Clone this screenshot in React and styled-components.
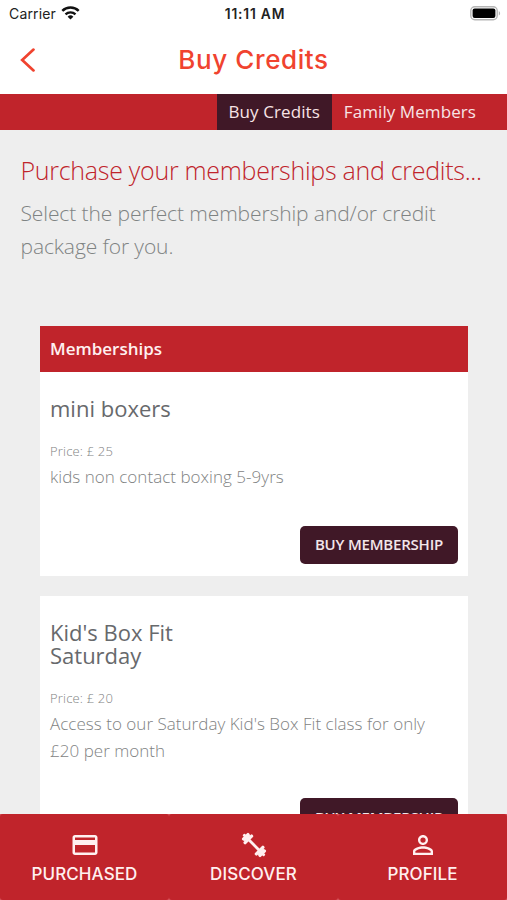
import React from "react";
import styled, { createGlobalStyle, ThemeProvider } from "styled-components";
import { MdOutlineCreditCard, MdPersonOutline } from "react-icons/md";

const theme = {
  colors: {
    brand: "#c0242b",
    brandDark: "#401827",
    tint: "#f0432f",
    page: "#eeeeee",
    heading: "#67696c",
    muted: "#7f8383"
  },
  fonts: {
    system: `Inter, "Liberation Sans", sans-serif`,
    body: `"Open Sans", "Noto Sans", sans-serif`
  }
};

const GlobalStyle = createGlobalStyle`
  * {
    box-sizing: border-box;
  }
  body {
    margin: 0;
    background: #ffffff;
  }
  h1, h2, h3, p {
    margin: 0;
    font-weight: 400;
  }
`;

const Screen = styled.div`
  display: flex;
  flex-direction: column;
  width: 507px;
  height: 900px;
  overflow: hidden;
  background: #ffffff;
  font-family: ${({ theme }) => theme.fonts.body};
`;

const StatusBar = styled.div`
  display: grid;
  grid-template-columns: 1fr auto 1fr;
  align-items: center;
  flex: none;
  height: 28px;
  padding: 0 6px 0 9px;
  font: 500 14px/28px ${({ theme }) => theme.fonts.system};
  color: #222222;
`;

const Carrier = styled.div`
  display: flex;
  align-items: center;
  gap: 5px;
  font-weight: 400;
  letter-spacing: 0.15px;

  svg {
    margin-top: -3px;
  }
`;

const Clock = styled.div`
  font-weight: 600;
  font-size: 13.8px;
  letter-spacing: 0.8px;
`;

const BatterySlot = styled.div`
  display: flex;
  justify-content: flex-end;
  margin-top: -2px;
`;

const NavBar = styled.header`
  display: grid;
  grid-template-columns: 60px 1fr 60px;
  align-items: center;
  flex: none;
  height: 66px;
  padding-bottom: 3px;
`;

const BackButton = styled.button`
  display: flex;
  padding: 0 0 0 20px;
  border: 0;
  background: none;
`;

const NavTitle = styled.h1`
  font-family: ${({ theme }) => theme.fonts.system};
  font-size: 26px;
  font-weight: 500;
  letter-spacing: 0.6px;
  text-align: center;
  color: ${({ theme }) => theme.colors.tint};
`;

const Tabs = styled.nav`
  display: flex;
  justify-content: flex-end;
  flex: none;
  height: 36px;
  padding-right: 19px;
  background: ${({ theme }) => theme.colors.brand};
`;

const Tab = styled.a`
  padding: 0 12px;
  font-size: 17px;
  letter-spacing: 0.08px;
  line-height: 36px;
  color: #f8e4e6;
  background: ${({ $active, theme }) =>
    $active ? theme.colors.brandDark : "transparent"};
`;

const Content = styled.main`
  flex: 1;
  min-height: 0;
  overflow: hidden;
  padding: 23px 19px 0 20.5px;
  background: ${({ theme }) => theme.colors.page};
`;

const Title = styled.h2`
  font-size: 25px;
  font-weight: 300;
  letter-spacing: -0.28px;
  line-height: 34px;
  white-space: nowrap;
  color: ${({ theme }) => theme.colors.brand};
`;

const Intro = styled.p`
  margin-top: 10px;
  font-size: 21px;
  font-weight: 300;
  letter-spacing: -0.1px;
  line-height: 33px;
  color: ${({ theme }) => theme.colors.muted};
`;

const Packages = styled.section`
  display: flex;
  flex-direction: column;
  gap: 20px;
  margin: 63px 20px 0 19.5px;
`;

const Card = styled.article`
  background: #ffffff;
`;

const CardHeader = styled.div`
  height: 46px;
  padding-left: 10px;
  font-size: 17px;
  font-weight: 600;
  line-height: 46px;
  color: #fff0f0;
  background: ${({ theme }) => theme.colors.brand};
`;

const CardBody = styled.div`
  display: flex;
  flex-direction: column;
  padding: 25px 10px 12px;
`;

const CardTitle = styled.h3`
  max-width: 190px;
  font-size: 22px;
  line-height: 23.5px;
  color: ${({ theme }) => theme.colors.heading};
`;

const Price = styled.p`
  margin-top: 20px;
  font-size: 13px;
  font-weight: 300;
  letter-spacing: 0.18px;
  line-height: 20px;
  color: ${({ theme }) => theme.colors.muted};
`;

const Description = styled.p`
  max-width: 390px;
  margin-top: 2px;
  font-size: 17px;
  font-weight: 300;
  letter-spacing: 0.03px;
  line-height: 27px;
  color: ${({ theme }) => theme.colors.muted};
`;

const BuyButton = styled.button`
  align-self: flex-end;
  width: 158px;
  height: 38px;
  margin-top: ${({ $tight }) => ($tight ? 34.8 : 36)}px;
  padding: 0;
  border: 0;
  border-radius: 5px;
  font: 600 15px/37px ${({ theme }) => theme.fonts.body};
  letter-spacing: -0.2px;
  text-transform: uppercase;
  white-space: nowrap;
  color: #f3e6ea;
  background: ${({ theme }) => theme.colors.brandDark};
`;

const TabBar = styled.footer`
  display: grid;
  grid-template-columns: repeat(3, 1fr);
  flex: none;
  height: 86px;
  background: #d5545a;
`;

const TabBarItem = styled.a`
  display: flex;
  flex-direction: column;
  align-items: center;
  padding-top: 16px;
  border-radius: 3px;
  font: 500 17px/24px ${({ theme }) => theme.fonts.system};
  letter-spacing: 0.1px;
  color: #fff0f0;
  background: ${({ theme }) => theme.colors.brand};

  span {
    margin-top: 2px;
  }
`;

const WifiIcon = () => (
  <svg width="19" height="14" viewBox="0 0 19 14" fill="none" stroke="#111">
    <path d="M1.3 4.9a11.7 11.7 0 0 1 16.4 0" strokeWidth="2.5" />
    <path d="M4.5 8.3a7.2 7.2 0 0 1 10 0" strokeWidth="2.3" />
    <path d="M9.5 13.6 6.6 10.7a4.1 4.1 0 0 1 5.8 0z" fill="#111" stroke="none" />
  </svg>
);

const BatteryIcon = () => (
  <svg width="31" height="15" viewBox="0 0 31 15">
    <rect x="0.8" y="0.8" width="26.4" height="13" rx="4" fill="#fff" stroke="#b5b5b5" strokeWidth="1.4" />
    <rect x="2.6" y="2.6" width="22.8" height="9.4" rx="2" fill="#000" />
    <path d="M28.8 5v4.6c1.8-.8 1.8-3.8 0-4.6z" fill="#b5b5b5" />
  </svg>
);

const BackIcon = () => (
  <svg width="16" height="24" viewBox="0 0 16 24" fill="none">
    <path d="M13.5 1.6 2.2 12l11.3 10.4" stroke={theme.colors.tint} strokeWidth="2.7" strokeLinecap="round" />
  </svg>
);

const DumbbellIcon = ({ size }) => (
  <svg width={size} height={size} viewBox="-15 -15 30 30" fill="currentColor">
    <g transform="rotate(45)">
      <rect x="-15" y="-1.4" width="30" height="2.8" rx="1" />
      <rect x="-9.6" y="-6.2" width="3.2" height="12.4" rx="1.3" />
      <rect x="6.4" y="-6.2" width="3.2" height="12.4" rx="1.3" />
      <rect x="-13.2" y="-4.7" width="3.2" height="9.4" rx="1.3" />
      <rect x="10" y="-4.7" width="3.2" height="9.4" rx="1.3" />
      <rect x="-11" y="-4" width="2" height="8" />
      <rect x="9" y="-4" width="2" height="8" />
    </g>
  </svg>
);

const packages = [
  {
    title: "mini boxers",
    price: "£ 25",
    description: "kids non contact boxing 5-9yrs",
    header: "Memberships"
  },
  {
    title: "Kid's Box Fit Saturday",
    price: "£ 20",
    description: "Access to our Saturday Kid's Box Fit class for only £20 per month"
  }
];

const links = [
  { label: "PURCHASED", Icon: MdOutlineCreditCard },
  { label: "DISCOVER", Icon: DumbbellIcon },
  { label: "PROFILE", Icon: MdPersonOutline }
];

const PackageCard = ({ header, title, price, description }) => (
  <Card>
    {header && <CardHeader>{header}</CardHeader>}
    <CardBody>
      <CardTitle>{title}</CardTitle>
      <Price>Price: {price}</Price>
      <Description>{description}</Description>
      <BuyButton $tight={!header}>Buy membership</BuyButton>
    </CardBody>
  </Card>
);

export default function App() {
  return (
    <ThemeProvider theme={theme}>
      <GlobalStyle />
      <Screen>
        <StatusBar>
          <Carrier>
            Carrier <WifiIcon />
          </Carrier>
          <Clock>11:11 AM</Clock>
          <BatterySlot>
            <BatteryIcon />
          </BatterySlot>
        </StatusBar>
        <NavBar>
          <BackButton aria-label="Back">
            <BackIcon />
          </BackButton>
          <NavTitle>Buy Credits</NavTitle>
        </NavBar>
        <Tabs>
          <Tab $active>Buy Credits</Tab>
          <Tab>Family Members</Tab>
        </Tabs>
        <Content>
          <Title>Purchase your memberships and credits...</Title>
          <Intro>
            Select the perfect membership and/or credit package for you.
          </Intro>
          <Packages>
            {packages.map((item) => (
              <PackageCard key={item.title} {...item} />
            ))}
          </Packages>
        </Content>
        <TabBar>
          {links.map(({ label, Icon }) => (
            <TabBarItem key={label}>
              <Icon size={30} />
              <span>{label}</span>
            </TabBarItem>
          ))}
        </TabBar>
      </Screen>
    </ThemeProvider>
  );
}
